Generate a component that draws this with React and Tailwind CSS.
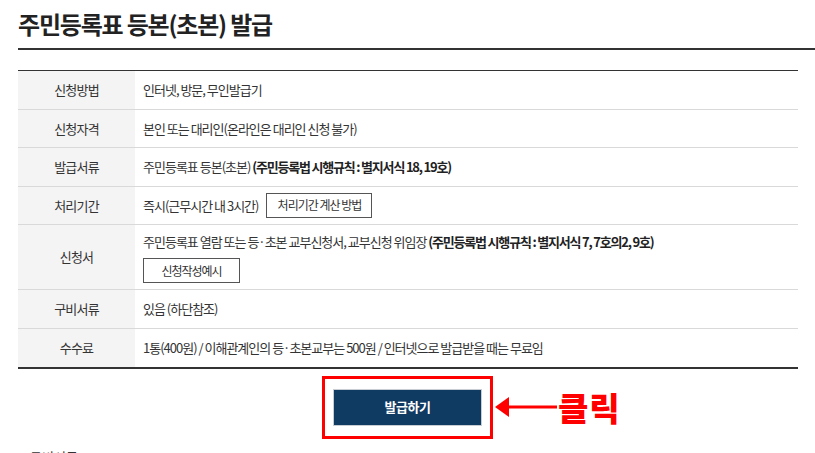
import React from "react";

const font = { fontFamily: '"Noto Sans CJK KR", "Noto Sans", sans-serif' };

function Row({ label, children, tall }) {
  return (
    <div className={`flex border-b border-[#d9d9d9] ${tall ? "h-[65px]" : "h-[38.5px]"}`}>
      <div className="w-[117px] shrink-0 bg-[#f4f4f4] flex items-center justify-center text-[13px] text-[#333] tracking-[-0.8px]">
        {label}
      </div>
      <div className="flex-1 pl-[8px] flex flex-col justify-center text-[13px] text-[#333] tracking-[-1px]">
        {children}
      </div>
    </div>
  );
}

export default function App() {
  return (
    <div className="w-[815px] h-[453px] overflow-hidden bg-white relative" style={font}>
      <div className="pl-[18px] pt-[6px]">
        <h1 className="text-[24px] font-bold text-[#222] tracking-[-1.2px] leading-[36px]">주민등록표 등본(초본) 발급</h1>
        <div className="mt-[6px] h-[2px] bg-[#333] w-[797px]" />
        <div className="mt-[20px] w-[780px] border-t border-[#333]">
          <Row label="신청방법">인터넷, 방문, 무인발급기</Row>
          <Row label="신청자격">본인 또는 대리인(온라인은 대리인 신청 불가)</Row>
          <Row label="발급서류">
            <span>
              주민등록표 등본(초본) <b className="font-bold text-[#222] tracking-[-1.2px]">(주민등록법 시행규칙 : 별지서식 18, 19호)</b>
            </span>
          </Row>
          <Row label="처리기간">
            <div className="flex items-center gap-[8px]">
              <span>즉시(근무시간 내 3시간)</span>
              <span className="h-[25px] w-[106px] border border-[#555] flex items-center justify-center text-[12px]">처리기간 계산 방법</span>
            </div>
          </Row>
          <Row label="신청서" tall>
            <div className="leading-[18px] mt-[2px]">
              주민등록표 열람 또는 등·초본 교부신청서, 교부신청 위임장 <b className="font-bold text-[#222] tracking-[-1.2px]">(주민등록법 시행규칙 : 별지서식 7, 7호의2, 9호)</b>
            </div>
            <span className="mt-[7px] h-[25px] w-[97px] border border-[#555] flex items-center justify-center text-[12px]">신청작성예시</span>
          </Row>
          <Row label="구비서류">있음 (하단참조)</Row>
          <div className="flex h-[40px] border-b-2 border-[#333]">
            <div className="w-[117px] shrink-0 bg-[#f4f4f4] flex items-center justify-center text-[13px] text-[#333] tracking-[-0.8px]">수수료</div>
            <div className="flex-1 pl-[8px] flex items-center text-[13px] text-[#333] tracking-[-1px]">
              1통(400원) / 이해관계인의 등·초본교부는 500원 / 인터넷으로 발급받을 때는 무료임
            </div>
          </div>
        </div>
        <div className="mt-[7px] flex items-center">
          <div className="ml-[304px] w-[171px] h-[63px] border-[3px] border-[#ff0000] flex items-center justify-center">
            <div className="w-[149px] h-[37px] bg-[#0f3a62] border border-[#c8cdd3] flex items-center justify-center text-white text-[13px] font-bold tracking-[-0.5px]">
              발급하기
            </div>
          </div>
          <svg width="62" height="24" viewBox="0 0 62 24" className="ml-[2px]">
            <polygon points="0,12 14,2 14,22" fill="#ff0000" />
            <rect x="12" y="10.5" width="50" height="3" fill="#ff0000" />
          </svg>
          <span className="ml-[1px] text-[#ff0000] font-black text-[33px] leading-none tracking-[1px]">클릭</span>
        </div>
        <div className="mt-[8px] ml-[12px] text-[13px] text-[#333]">구비서류</div>
      </div>
    </div>
  );
}
